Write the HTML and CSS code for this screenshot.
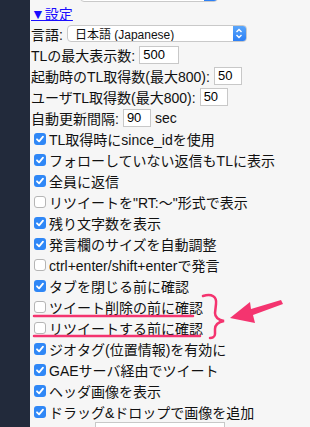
FILE: index.html
```html
<!DOCTYPE html>
<html lang="ja">
<head>
    <meta charset="UTF-8">
    <meta name="viewport" content="width=device-width, initial-scale=1.0">
    <title>設定</title>
    <link rel="stylesheet" href="styles.css">
</head>
<body>
    <div class="sidebar"></div>
    <div class="content">
        <div class="fake-select prev-select"><span class="sel-btn"></span></div>
        <div class="row"><a href="#" class="toggle">▼設定</a></div>
        <div class="row">
            <span>言語:</span>
            <div class="fake-select lang-select">
                <span class="sel-text">日本語 (Japanese)</span>
                <span class="sel-btn">
                    <svg width="8" height="11" viewBox="0 0 8 11"><path d="M1.5 4 L4 1.5 L6.5 4 M1.5 7 L4 9.5 L6.5 7" fill="none" stroke="#fff" stroke-width="1.4"/></svg>
                </span>
            </div>
        </div>
        <div class="row">TLの最大表示数: <input type="text" class="num wide" value="500"></div>
        <div class="row">起動時のTL取得数(最大800): <input type="text" class="num" value="50"></div>
        <div class="row">ユーザTL取得数(最大800): <input type="text" class="num" value="50"></div>
        <div class="row">自動更新間隔: <input type="text" class="num" value="90"> sec</div>

        <label class="row check"><span class="box on"></span>TL取得時にsince_idを使用</label>
        <label class="row check"><span class="box on"></span>フォローしていない返信もTLに表示</label>
        <label class="row check"><span class="box on"></span>全員に返信</label>
        <label class="row check"><span class="box"></span>リツイートを"RT:～"形式で表示</label>
        <label class="row check"><span class="box on"></span>残り文字数を表示</label>
        <label class="row check"><span class="box on"></span>発言欄のサイズを自動調整</label>
        <label class="row check"><span class="box"></span>ctrl+enter/shift+enterで発言</label>
        <label class="row check"><span class="box on"></span>タブを閉じる前に確認</label>
        <label class="row check"><span class="box"></span>ツイート削除の前に確認</label>
        <label class="row check"><span class="box"></span>リツイートする前に確認</label>
        <label class="row check"><span class="box on"></span>ジオタグ(位置情報)を有効に</label>
        <label class="row check"><span class="box on"></span>GAEサーバ経由でツイート</label>
        <label class="row check"><span class="box on"></span>ヘッダ画像を表示</label>
        <label class="row check"><span class="box on"></span>ドラッグ&amp;ドロップで画像を追加</label>
        <div class="row last">ミュート: <input type="text" class="long"></div>
    </div>

    <!-- 注釈 -->
    <svg class="note" width="310" height="427" viewBox="0 0 310 427">
        <g fill="none" stroke="#f4346f" stroke-width="2.5" stroke-linecap="round">
            <path d="M34 316 L193 316"/>
            <path d="M34 336 L200 336"/>
            <path d="M203 296 C212 293 217 297 216 304 L215 313 C215 318 219 320 224 321 C219 322 215 324 215 329 L215 334 C215 337 212 338 210 338"/>
        </g>
        <path d="M230 318 L250 302 L251 309 L281 300 L283 304 L253 315 L255 323 Z" fill="#f4346f"/>
    </svg>
</body>
</html>
```

FILE: styles.css
```css
body {
    margin: 0;
    padding: 0;
    display: flex;
    min-height: 427px;
    position: relative;
    overflow: hidden;
    font-family: "Liberation Sans", "Noto Sans CJK JP", sans-serif;
    font-size: 14px;
    color: #111;
}
.sidebar {
    width: 30px;
    flex-shrink: 0;
    background-color: #222a3b;
}
.content {
    flex: 1;
    background-color: #f6f6f6;
    padding-left: 1px;
}
.row {
    height: 21px;
    display: flex;
    align-items: center;
    white-space: nowrap;
}
.toggle {
    color: #1a0dff;
    text-decoration: underline;
}
.fake-select {
    display: flex;
    align-items: center;
    height: 17px;
    box-sizing: border-box;
    background-color: #fff;
    border: 1px solid #c9c9c9;
    border-radius: 4px;
    overflow: hidden;
}
.prev-select {
    width: 138px;
    margin: -15px 0 0 49px;
}
.lang-select {
    width: 180px;
    margin-left: 4px;
}
.sel-text {
    flex: 1;
    font-size: 12px;
    padding-left: 7px;
}
.sel-btn {
    width: 13px;
    height: 100%;
    margin-left: auto;
    display: flex;
    align-items: center;
    justify-content: center;
    background: linear-gradient(#5aa6fb, #2c7ff5);
}
.num {
    width: 28px;
    height: 18px;
    box-sizing: border-box;
    margin: 0 4px;
    padding: 0 3px;
    border: 1px solid #c8c8c8;
    background-color: #fff;
    font-family: "Liberation Sans", sans-serif;
    font-size: 13px;
}
.num.wide {
    width: 40px;
}
.check {
    cursor: pointer;
}
.box {
    width: 12px;
    height: 12px;
    box-sizing: border-box;
    margin: 0 3px 0 3px;
    border: 1px solid #b5b5b5;
    border-radius: 3px;
    background-color: #fff;
    flex-shrink: 0;
}
.box.on {
    border: none;
    background: #2f87f6 url("data:image/svg+xml,%3Csvg xmlns='http://www.w3.org/2000/svg' width='12' height='12'%3E%3Cpath d='M3 6.3 L5.1 8.4 L9 3.6' fill='none' stroke='white' stroke-width='1.8' stroke-linecap='round' stroke-linejoin='round'/%3E%3C/svg%3E") no-repeat center;
}
.last {
    align-items: flex-start;
}
.long {
    width: 130px;
    height: 18px;
    box-sizing: border-box;
    margin-left: 4px;
    border: 1px solid #c8c8c8;
    background-color: #fff;
}
.note {
    position: absolute;
    left: 0;
    top: 0;
    pointer-events: none;
}
```
